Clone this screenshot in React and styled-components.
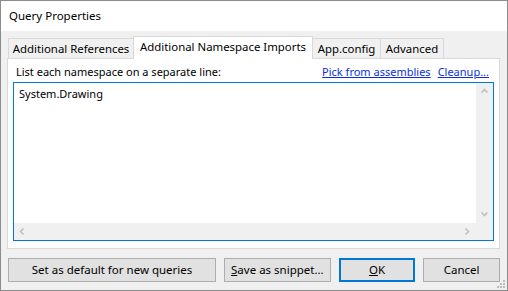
import styled, { createGlobalStyle } from "styled-components";

const GlobalStyle = createGlobalStyle`
  html, body {
    margin: 0;
    padding: 0;
    background: #fff;
  }
  * {
    box-sizing: border-box;
  }
`;

const Window = styled.div`
  position: relative;
  width: 508px;
  height: 291px;
  border: 1px solid #8c8c8c;
  display: flex;
  flex-direction: column;
  font-family: "Noto Sans", "Open Sans", sans-serif;
  font-size: 11px;
  color: #000;
  overflow: hidden;
`;

const TitleBar = styled.div`
  height: 30px;
  flex: none;
  background: #fff;
  display: flex;
  align-items: center;
  padding-left: 8px;
  padding-bottom: 1px;
  font-size: 11.5px;
`;

const Body = styled.div`
  flex: 1;
  background: #f0f0f0;
  padding: 5px 7px 8px 6px;
  display: flex;
  flex-direction: column;
`;

const TabStrip = styled.div`
  height: 22px;
  display: flex;
  align-items: flex-end;
  padding-left: 1px;
  position: relative;
  z-index: 1;
`;

const Tab = styled.div`
  width: ${(p) => p.$w}px;
  height: ${(p) => (p.$active ? 23 : 20)}px;
  margin-bottom: ${(p) => (p.$active ? -1 : 0)}px;
  margin-left: ${(p) => (p.$first ? 0 : -1)}px;
  background: ${(p) => (p.$active ? "#fff" : "#f0f0f0")};
  border: 1px solid #d9d9d9;
  border-bottom: none;
  display: flex;
  align-items: center;
  justify-content: center;
  padding-bottom: ${(p) => (p.$active ? 3 : 1)}px;
  font-size: 11.4px;
  white-space: nowrap;
`;

const Panel = styled.div`
  height: 191px;
  background: #fff;
  border: 1px solid #d9d9d9;
  display: flex;
  flex-direction: column;
  padding: 0 5px 7px 5px;
`;

const LabelRow = styled.div`
  height: 23px;
  display: flex;
  align-items: center;
  padding: 2px 5px 0 3px;
`;

const Label = styled.span`
  flex: 1;
`;

const Link = styled.a`
  color: #0a2fe0;
  text-decoration: underline;
  margin-left: ${(p) => p.$gap || 0}px;
  cursor: pointer;
`;

const Editor = styled.div`
  flex: 1;
  border: 1px solid #0078d7;
  display: grid;
  grid-template-columns: 1fr 17px;
  grid-template-rows: 1fr 17px;
`;

const Content = styled.div`
  background: #fff;
  padding: 3px 5px;
  font-size: 11px;
  line-height: 16px;
`;

const ScrollBar = styled.div`
  background: #f0f0f0;
  display: flex;
  flex-direction: ${(p) => (p.$vertical ? "column" : "row")};
  justify-content: space-between;
  align-items: center;
`;

const ArrowBox = styled.div`
  width: 17px;
  height: 17px;
  display: flex;
  align-items: center;
  justify-content: center;
`;

const Corner = styled.div`
  background: #f0f0f0;
`;

const ButtonRow = styled.div`
  margin-top: 9px;
  height: 24px;
  display: flex;
  gap: 8px;
  padding-left: 1px;
`;

const Button = styled.button`
  width: ${(p) => p.$w}px;
  height: 24px;
  background: #e1e1e1;
  border: ${(p) => (p.$default ? "2px solid #0078d7" : "1px solid #adadad")};
  font-family: inherit;
  font-size: 11.5px;
  color: #000;
  padding: 0 0 1px;
  margin: 0;
`;

const Mnemonic = styled.span`
  text-decoration: underline;
`;

const Grip = styled.svg`
  position: absolute;
  right: 1px;
  bottom: 1px;
`;

function Chevron({ dir }) {
  const paths = {
    up: "M1.5 5.5 L4.5 2.5 L7.5 5.5",
    down: "M1.5 2.5 L4.5 5.5 L7.5 2.5",
    left: "M5.5 1.5 L2.5 4.5 L5.5 7.5",
    right: "M2.5 1.5 L5.5 4.5 L2.5 7.5",
  };
  return (
    <svg width="9" height="9" viewBox="0 0 9 9">
      <path d={paths[dir]} fill="none" stroke="#bfbfbf" strokeWidth="1.6" />
    </svg>
  );
}

export default function App() {
  return (
    <>
      <GlobalStyle />
      <Window>
        <TitleBar>Query Properties</TitleBar>
        <Body>
          <TabStrip>
            <Tab $first $w={126}>Additional References</Tab>
            <Tab $active $w={180}>Additional Namespace Imports</Tab>
            <Tab $w={69}>App.config</Tab>
            <Tab $w={64}>Advanced</Tab>
          </TabStrip>
          <Panel>
            <LabelRow>
              <Label>List each namespace on a separate line:</Label>
              <Link>Pick from assemblies</Link>
              <Link $gap={7}>Cleanup...</Link>
            </LabelRow>
            <Editor>
              <Content>System.Drawing</Content>
              <ScrollBar $vertical>
                <ArrowBox><Chevron dir="up" /></ArrowBox>
                <ArrowBox><Chevron dir="down" /></ArrowBox>
              </ScrollBar>
              <ScrollBar>
                <ArrowBox><Chevron dir="left" /></ArrowBox>
                <ArrowBox><Chevron dir="right" /></ArrowBox>
              </ScrollBar>
              <Corner />
            </Editor>
          </Panel>
          <ButtonRow>
            <Button $w={209}>Set as default for new queries</Button>
            <Button $w={107}>
              <Mnemonic>S</Mnemonic>ave as snippet...
            </Button>
            <Button $w={77} $default>
              <Mnemonic>O</Mnemonic>K
            </Button>
            <Button $w={77}>Cancel</Button>
          </ButtonRow>
        </Body>
        <Grip width="10" height="10" viewBox="0 0 10 10">
          <rect x="7" y="1" width="2" height="2" fill="#bcbcbc" />
          <rect x="4" y="4" width="2" height="2" fill="#bcbcbc" />
          <rect x="7" y="4" width="2" height="2" fill="#bcbcbc" />
          <rect x="1" y="7" width="2" height="2" fill="#bcbcbc" />
          <rect x="4" y="7" width="2" height="2" fill="#bcbcbc" />
          <rect x="7" y="7" width="2" height="2" fill="#bcbcbc" />
        </Grip>
      </Window>
    </>
  );
}
